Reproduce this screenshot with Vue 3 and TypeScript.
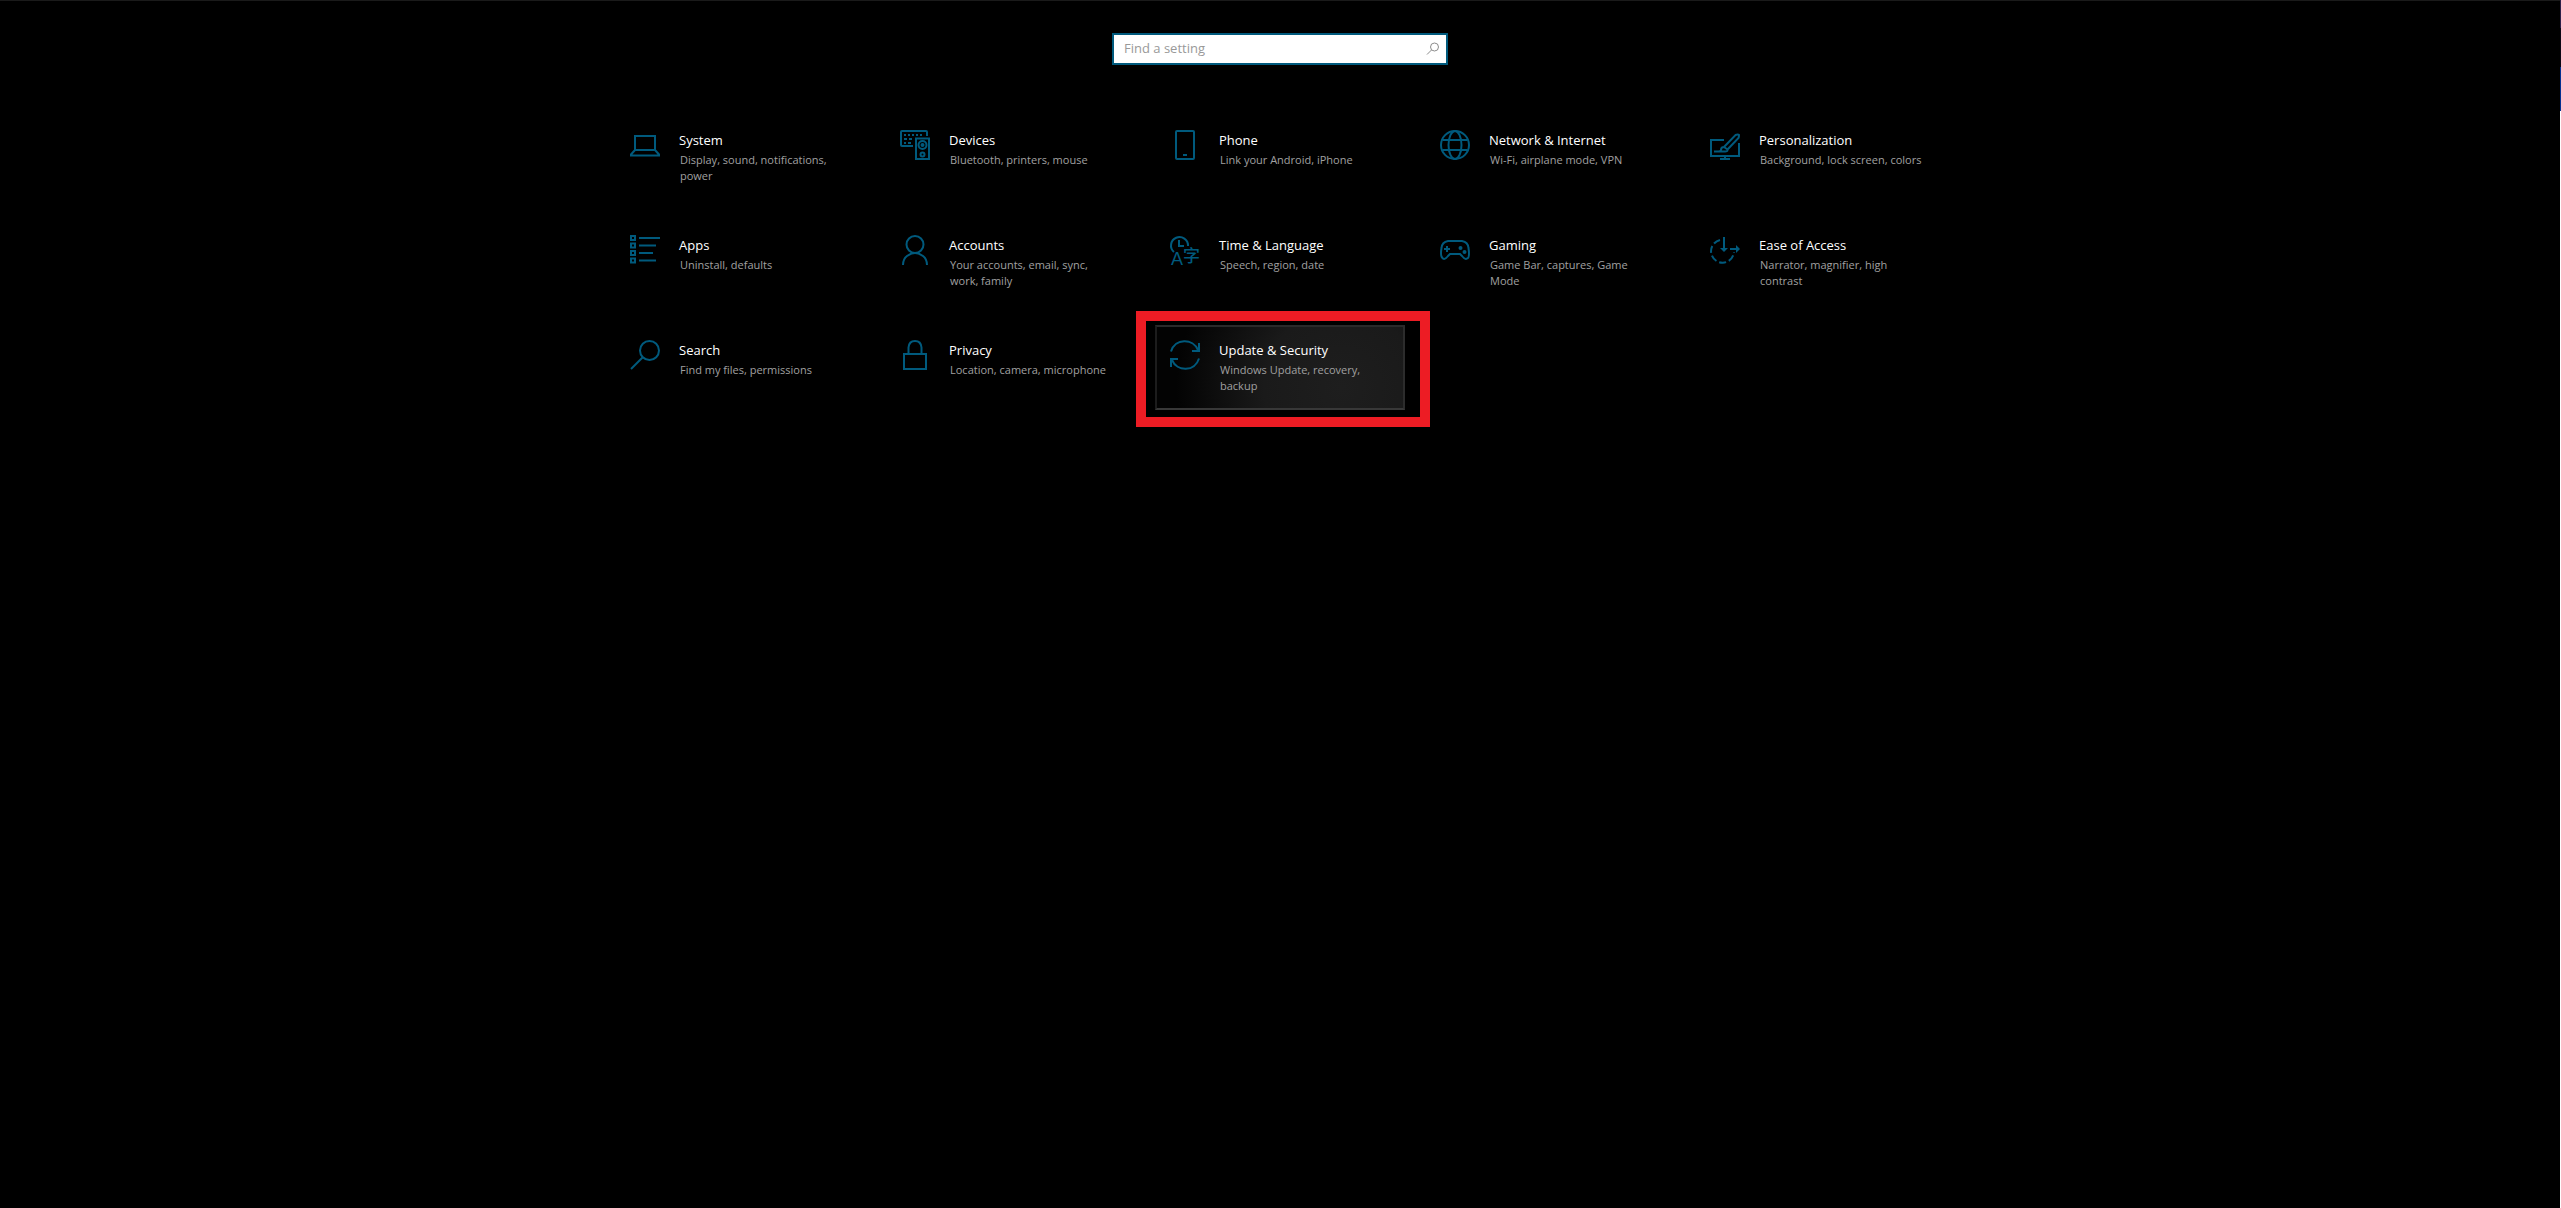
<script setup lang="ts">
import { ref } from 'vue'

interface Category {
  id: string
  title: string
  detail: string
  active?: boolean
}

const query = ref('')

const categories: Category[] = [
  { id: 'system', title: 'System', detail: 'Display, sound, notifications,\npower' },
  { id: 'devices', title: 'Devices', detail: 'Bluetooth, printers, mouse' },
  { id: 'phone', title: 'Phone', detail: 'Link your Android, iPhone' },
  { id: 'network', title: 'Network & Internet', detail: 'Wi-Fi, airplane mode, VPN' },
  { id: 'personalization', title: 'Personalization', detail: 'Background, lock screen, colors' },
  { id: 'apps', title: 'Apps', detail: 'Uninstall, defaults' },
  { id: 'accounts', title: 'Accounts', detail: 'Your accounts, email, sync,\nwork, family' },
  { id: 'time', title: 'Time & Language', detail: 'Speech, region, date' },
  { id: 'gaming', title: 'Gaming', detail: 'Game Bar, captures, Game\nMode' },
  { id: 'ease', title: 'Ease of Access', detail: 'Narrator, magnifier, high\ncontrast' },
  { id: 'search', title: 'Search', detail: 'Find my files, permissions' },
  { id: 'privacy', title: 'Privacy', detail: 'Location, camera, microphone' },
  { id: 'update', title: 'Update & Security', detail: 'Windows Update, recovery,\nbackup', active: true },
]
</script>

<template>
  <div class="window">
    <main class="page">
      <form class="search" role="search" @submit.prevent>
        <input v-model="query" class="search-input" type="text" placeholder="Find a setting" aria-label="Find a setting" />
        <button class="search-button" type="submit" aria-label="Search">
          <svg width="14" height="14" viewBox="0 0 14 14" fill="none" stroke="#8c8c8c">
            <circle cx="8.5" cy="5" r="4" />
            <path d="M5.5 8 L1 12.5" />
          </svg>
        </button>
      </form>

      <nav class="grid" aria-label="Settings categories">
        <a v-for="c in categories" :key="c.id" :href="'#' + c.id" class="tile" :class="{ active: c.active }">
          <svg class="icon" viewBox="0 0 30 30" aria-hidden="true">
            <template v-if="c.id === 'system'">
              <path d="M5 6h20v14H5zM5 20L1 24.5V25.5H29V24.5L25 20" />
            </template>
            <template v-else-if="c.id === 'devices'">
              <path d="M13 16H2Q1 16 1 15V2Q1 1 2 1H26Q27 1 27 2V6" />
              <path d="M4 5h20" stroke-dasharray="2 2" />
              <path d="M4 9h8M4 13h2M8 13h5" stroke-dasharray="3 2" />
              <path d="M16 8.500h13V29H16z" />
              <circle cx="22.500" cy="15" r="4" />
              <circle cx="22.500" cy="15" r="1" />
              <circle cx="22.500" cy="24.500" r="2" />
            </template>
            <template v-else-if="c.id === 'phone'">
              <rect x="6" y="1" width="18" height="28" rx="1" />
              <path d="M13 25h4" />
            </template>
            <template v-else-if="c.id === 'network'">
              <circle cx="15" cy="15" r="14" />
              <ellipse cx="15" cy="15" rx="6.500" ry="14" />
              <path d="M2.500 10h25M2.500 20h25" />
            </template>
            <template v-else-if="c.id === 'personalization'">
              <path d="M14 10H1V26H29V13M15 26v3M10 29h10" />
              <path d="M14 17L25.500 5Q28 4 29 5Q29 7 28.500 8L17.500 19.500M14 17L17.500 19.500M14 17Q11 17 11 20Q11 21.500 4 21.500H14Q18 22 17.500 19.500" />
            </template>
            <template v-else-if="c.id === 'apps'">
              <path d="M1 1h4v4H1zM1 8.500h4v4H1zM1 16h4v4H1zM1 23.500h4v4H1z" />
              <path d="M9 3h21M9 10.500h17M9 18h14M9 25.500h17" />
            </template>
            <template v-else-if="c.id === 'accounts'">
              <circle cx="15" cy="9.500" r="8.500" />
              <path d="M3 30Q3 24 7 21Q15 15 23 21Q27 24 27 30" />
            </template>
            <template v-else-if="c.id === 'time'">
              <path d="M4 17A8.500 8.500 0 1 1 18 11M9 5v6h5" />
              <text x="1" y="30" class="latin">A</text>
              <text x="13" y="27" class="han">字</text>
            </template>
            <template v-else-if="c.id === 'gaming'">
              <path d="M8 6H22Q28 7 28.500 13Q30 23 27 23.500Q25 25 22 21L20 19H10L8 21Q5 25 3 23.500Q0 22 1.500 13Q2 7 8 6Z" />
              <path d="M4 14h6M7 11v6" />
              <circle cx="20.500" cy="13" r="1" />
              <circle cx="24.500" cy="17" r="1" />
            </template>
            <template v-else-if="c.id === 'ease'">
              <path d="M10 5A11.500 11.500 0 1 0 24 17" stroke-dasharray="7 3" />
              <path d="M14 2V14" />
              <path d="M20 14h7" />
              <path class="solid" d="M10 13h8l-4 4zM26 10l4 4l-4 4z" />
            </template>
            <template v-else-if="c.id === 'search'">
              <circle cx="19.500" cy="10.500" r="9.500" />
              <path d="M13 17L1 29" />
            </template>
            <template v-else-if="c.id === 'privacy'">
              <path d="M4 14h22v15H4zM8.500 14V7.500Q9 1 15 1Q21 1 21.500 7.500V14" />
            </template>
            <template v-else>
              <path d="M1 11.500C5 -2 23 -2 28 10M29 3V11H22" />
              <path d="M29 18.500C25 32 7 32 2 20M1 27V19H8" />
            </template>
          </svg>
          <span class="text">
            <span class="title">{{ c.title }}</span>
            <span class="detail">{{ c.detail }}</span>
          </span>
          <span v-if="c.active" class="marker"></span>
        </a>
      </nav>
    </main>
    <div class="edge"></div>
  </div>
</template>

<style>
body {
  background: #000;
}
</style>

<style scoped>
.window {
  display: flex;
  min-height: 100vh;
  background: #000;
  font-family: "Segoe UI", "Open Sans", "Noto Sans", sans-serif;
}

.page {
  flex: 1;
  display: flex;
  flex-direction: column;
  align-items: center;
  gap: 50px;
  padding: 32px 16px;
  border-top: 1px solid #1a1a1a;
}

.edge {
  width: 1px;
  background: linear-gradient(#2c2048 0 28px, #0b0714 28px 67px, #06308f 67px 111px, #fff 111px);
}

.search {
  box-sizing: border-box;
  display: flex;
  align-items: center;
  width: 336px;
  max-width: 100%;
  height: 32px;
  border: 2px solid #005a7d;
  background: #fff;
}

.search-input {
  flex: 1;
  min-width: 0;
  padding: 0 0 2px 10px;
  border: 0;
  outline: 0;
  background: none;
  font: 13px/20px "Segoe UI", "Open Sans", "Noto Sans", sans-serif;
  color: #000;
}

.search-input::placeholder {
  color: #999;
  opacity: 1;
}

.search-button {
  display: flex;
  padding: 0 6px;
  border: 0;
  background: none;
}

.grid {
  display: grid;
  grid-template-columns: repeat(auto-fill, 250px);
  justify-content: center;
  gap: 20px;
  width: 100%;
  max-width: 1330px;
}

.tile {
  position: relative;
  box-sizing: border-box;
  display: flex;
  gap: 19px;
  min-height: 85px;
  padding: 13px;
  border: 2px solid transparent;
  color: #fff;
  text-decoration: none;
}

.tile.active {
  border-color: #2a2a2a #2c2c2c #383838 #1c1c1c;
  background: radial-gradient(circle at 75% 75%, #1e1e1e 0, #1a1a1a 40%, #030303 85%);
}

.icon {
  flex: none;
  width: 30px;
  height: 30px;
  overflow: visible;
  fill: none;
  stroke: #005a7d;
  stroke-width: 2;
}

.icon .solid {
  fill: #005a7d;
  stroke: none;
}

.icon text {
  fill: #005a7d;
  stroke: none;
}

.latin {
  font: 18px "Liberation Sans", sans-serif;
}

.han {
  font: 500 17px "Noto Sans CJK SC", sans-serif;
}

.text {
  display: flex;
  flex-direction: column;
  gap: 2px;
  white-space: pre;
}

.title {
  font-size: 13px;
  line-height: 20px;
}

.detail {
  padding-left: 1px;
  font-size: 11px;
  line-height: 16px;
  color: #a0a0a0;
}

.marker {
  position: absolute;
  inset: -16px -27px -19px -21px;
  border: 10px solid #ed1c24;
  pointer-events: none;
}
</style>
